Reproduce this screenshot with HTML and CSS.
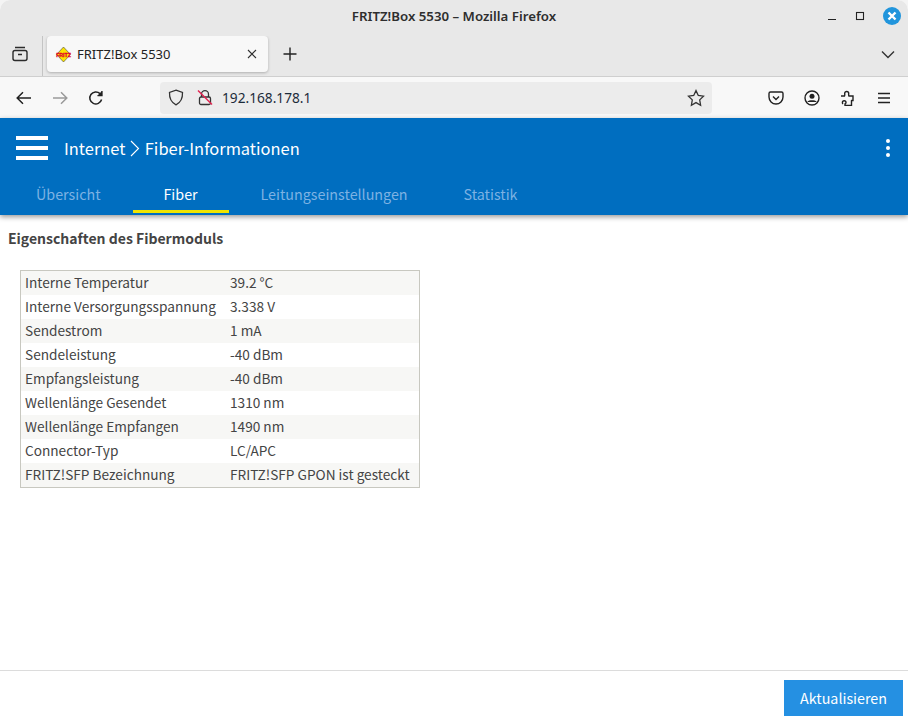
FILE: index.html
```html
<!DOCTYPE html>
<html lang="de">
<head>
  <meta charset="UTF-8">
  <title>FRITZ!Box 5530 – Mozilla Firefox</title>
  <link rel="stylesheet" href="styles.css">
</head>
<body>
  <div class="window">
    <div class="titlebar">
      <span class="window-title">FRITZ!Box 5530 – Mozilla Firefox</span>
      <div class="window-buttons">
        <svg width="12" height="12" viewBox="0 0 12 12"><path d="M2 9.500h8" stroke="#222" stroke-width="1.200" fill="none"/></svg>
        <svg width="12" height="12" viewBox="0 0 12 12"><rect x="2.500" y="2.500" width="7" height="7" stroke="#222" stroke-width="1.100" fill="none"/></svg>
        <span class="close-btn">
          <svg width="18" height="18" viewBox="0 0 18 18"><path d="M5.500 5.500l7 7M12.500 5.500l-7 7" stroke="#fff" stroke-width="2.400" fill="none"/></svg>
        </span>
      </div>
    </div>

    <div class="tabbar">
      <div class="tab-view">
        <svg width="18" height="18" viewBox="0 0 18 18" fill="none" stroke="#2b2b2b" stroke-width="1.400"><path d="M4 2.500h10"/><rect x="2" y="5.500" width="14" height="10" rx="2"/><path d="M7 9.500h4"/></svg>
      </div>
      <div class="tab">
        <svg class="favicon" width="17" height="17" viewBox="0 0 17 17"><path d="M8.500 1L15.500 8.500 8.500 16 1.500 8.500z" fill="#fce300" stroke="#444" stroke-width=".6"/><text x="8.500" y="10.500" class="favicon-text">FRITZ</text></svg>
        <span class="tab-label">FRITZ!Box 5530</span>
        <svg class="tab-close" width="10" height="10" viewBox="0 0 10 10"><path d="M1 1l8 8M9 1l-8 8" stroke="#333" stroke-width="1.100" fill="none"/></svg>
      </div>
      <svg class="new-tab" width="14" height="14" viewBox="0 0 14 14"><path d="M7 .5v13M.5 7h13" stroke="#222" stroke-width="1.400" fill="none"/></svg>
      <svg class="tab-list" width="14" height="9" viewBox="0 0 14 9"><path d="M1 1.500l6 6 6-6" stroke="#333" stroke-width="1.400" fill="none"/></svg>
    </div>

    <div class="navbar">
      <svg class="nav-icon" width="16" height="14" viewBox="0 0 16 14" fill="none" stroke="#222" stroke-width="1.500"><path d="M15 7H1.500M7 1.200L1.200 7 7 12.800"/></svg>
      <svg class="nav-icon" width="16" height="14" viewBox="0 0 16 14" fill="none" stroke="#9a9a9a" stroke-width="1.500"><path d="M1 7h13.500M9 1.200L14.800 7 9 12.800"/></svg>
      <svg class="nav-icon" width="16" height="16" viewBox="0 0 16 16" fill="none" stroke="#222" stroke-width="1.500"><path d="M13.600 9.500A6 6 0 1 1 12 3.600"/><path d="M14 1v4.600H9.500" stroke-width="1.300" fill="#222"/></svg>
      <div class="urlbar">
        <svg width="16" height="17" viewBox="0 0 16 17" fill="none" stroke="#333" stroke-width="1.300"><path d="M8 1.200L14.500 3.400C14.800 9.500 12.500 13.600 8 15.800 3.500 13.600 1.200 9.500 1.500 3.400z"/></svg>
        <svg class="lock" width="16" height="17" viewBox="0 0 16 17" fill="none"><path d="M4.500 8V5.200a3.500 3.500 0 0 1 7 0V8" stroke="#333" stroke-width="1.300"/><rect x="2.500" y="8" width="11" height="7.500" rx="1.500" stroke="#333" stroke-width="1.300"/><path d="M1 1.500l14 14" stroke="#e2224f" stroke-width="1.400"/></svg>
        <span class="url">192.168.178.1</span>
        <svg class="star" width="18" height="18" viewBox="0 0 18 18" fill="none" stroke="#333" stroke-width="1.300"><path d="M9 1.600l2.300 4.900 5.200.7-3.800 3.700.9 5.300L9 13.600l-4.600 2.600.9-5.300L1.500 7.200l5.200-.7z"/></svg>
      </div>
      <div class="toolbar-icons">
        <svg width="16" height="16" viewBox="0 0 16 16" fill="none" stroke="#222" stroke-width="1.400"><path d="M2.500 2h11A1.500 1.500 0 0 1 15 3.500V7A7 7 0 0 1 1 7V3.500A1.500 1.500 0 0 1 2.500 2z"/><path d="M5 6.500l3 3 3-3"/></svg>
        <svg width="16" height="16" viewBox="0 0 16 16" fill="none"><circle cx="8" cy="8" r="7" stroke="#222" stroke-width="1.400"/><circle cx="8" cy="6.300" r="2.500" fill="#222"/><path d="M3.500 11.500C5 9.800 11 9.800 12.500 11.500V12H3.500z" fill="#222"/></svg>
        <svg width="16" height="16" viewBox="0 0 16 16" fill="none" stroke="#222" stroke-width="1.400"><path d="M1 6h3.500c.5-1 .2-1.500.2-2.500a2 2 0 0 1 4 0c0 1-.3 1.500.2 2.500H13v4.500c-1 0-1.500-.2-1.500 0v5H5v-1.500c1-.5 1-1 1-1.500a1.800 1.800 0 0 0-3.600 0c0 .5 0 1 .6 1.500"/></svg>
        <svg width="16" height="12" viewBox="0 0 16 12" fill="none" stroke="#222" stroke-width="1.300"><path d="M2 1.500h12M2 6h12M2 10.500h12"/></svg>
      </div>
    </div>

    <header class="app-header">
      <div class="app-title-row">
        <div class="burger"><span></span><span></span><span></span></div>
        <h1 class="breadcrumb">Internet
          <svg class="crumb-sep" width="10" height="17" viewBox="0 0 10 17"><path d="M1 1l7.500 7.500L1 16" stroke="#fff" stroke-width="1.100" fill="none"/></svg>
          Fiber-Informationen</h1>
        <div class="dots"><span></span><span></span><span></span></div>
      </div>
      <nav class="app-tabs">
        <a class="app-tab">Übersicht</a>
        <a class="app-tab active">Fiber</a>
        <a class="app-tab">Leitungseinstellungen</a>
        <a class="app-tab">Statistik</a>
      </nav>
    </header>

    <main class="content">
      <h2 class="section-title">Eigenschaften des Fibermoduls</h2>
      <table class="info-table">
        <tr><td>Interne Temperatur</td><td>39.2 °C</td></tr>
        <tr><td>Interne Versorgungsspannung</td><td>3.338 V</td></tr>
        <tr><td>Sendestrom</td><td>1 mA</td></tr>
        <tr><td>Sendeleistung</td><td>-40 dBm</td></tr>
        <tr><td>Empfangsleistung</td><td>-40 dBm</td></tr>
        <tr><td>Wellenlänge Gesendet</td><td>1310 nm</td></tr>
        <tr><td>Wellenlänge Empfangen</td><td>1490 nm</td></tr>
        <tr><td>Connector-Typ</td><td>LC/APC</td></tr>
        <tr><td>FRITZ!SFP Bezeichnung</td><td>FRITZ!SFP GPON ist gesteckt</td></tr>
      </table>
    </main>

    <footer class="app-footer">
      <button class="refresh">Aktualisieren</button>
    </footer>
  </div>
</body>
</html>
```
FILE: styles.css
```css
* {
  box-sizing: border-box;
}
html, body {
  margin: 0;
  padding: 0;
  background: #f4f4f4;
}
.window {
  width: 908px;
  height: 726px;
  display: flex;
  flex-direction: column;
  overflow: hidden;
  background: #fff;
  border-radius: 10px 10px 0 0;
  font-family: "Noto Sans", sans-serif;
}

/* browser chrome */
.titlebar {
  height: 36px;
  flex: none;
  display: flex;
  align-items: center;
  justify-content: center;
  position: relative;
  padding-bottom: 5px;
  background: #e8e8e8;
}
.window-title {
  font-size: 13.25px;
  font-weight: 600;
  color: #2e2e2e;
}
.window-buttons {
  position: absolute;
  right: 8px;
  top: 7px;
  display: flex;
  align-items: center;
  gap: 16px;
}
.close-btn {
  width: 18px;
  height: 18px;
  margin-left: 1px;
  margin-right: -1px;
  border-radius: 50%;
  background: #2195dc;
  display: block;
}
.close-btn svg {
  display: block;
}
.tabbar {
  height: 41px;
  flex: none;
  display: flex;
  align-items: center;
  background: #e8e8e8;
  border-bottom: 1px solid #cfcfcf;
  padding-bottom: 4px;
}
.tab-view {
  width: 43px;
  height: 40px;
  flex: none;
  margin-top: 4px;
  padding: 0 3px 5px 0;
  display: flex;
  align-items: center;
  justify-content: center;
  border-right: 1px solid #c4c4c4;
}
.tab {
  width: 221px;
  height: 36px;
  margin-left: 4px;
  flex: none;
  display: flex;
  align-items: center;
  padding: 0 11px 0 8px;
  background: #f8f8f8;
  border-radius: 4px;
  box-shadow: 0 1px 3px rgba(0, 0, 0, .25);
}
.favicon-text {
  font-family: "Liberation Sans", sans-serif;
  font-size: 5.2px;
  font-weight: 700;
  fill: #e2002a;
  stroke: #e2002a;
  stroke-width: .3px;
  text-anchor: middle;
}
.tab-label {
  margin-left: 5px;
  flex: 1;
  font-size: 13px;
  color: #222;
}
.new-tab {
  margin-left: 15px;
}
.tab-list {
  margin-left: auto;
  margin-right: 13px;
}
.navbar {
  height: 41px;
  flex: none;
  display: flex;
  align-items: center;
  padding-left: 16px;
  background: #f8f8f8;
}
.nav-icon {
  flex: none;
  margin-right: 20px;
}
.urlbar {
  width: 552px;
  height: 32px;
  flex: none;
  margin-left: 36px;
  display: flex;
  align-items: center;
  padding: 0 7px 0 8px;
  background: #ececec;
  border-radius: 4px;
}
.lock {
  margin-left: 13px;
}
.url {
  margin-left: 9px;
  flex: 1;
  font-size: 13.7px;
  color: #1c2b3a;
}
.toolbar-icons {
  margin-left: 56px;
  display: flex;
  align-items: center;
  gap: 20px;
}

/* fritzbox page */
.app-header {
  height: 97px;
  flex: none;
  background: #006ec0;
  box-shadow: 0 2px 5px rgba(0, 0, 0, .4);
  position: relative;
  color: #fff;
  font-family: "Noto Sans CJK JP", "Noto Sans", sans-serif;
}
.app-title-row {
  height: 60px;
  display: flex;
  align-items: center;
  padding: 0 18px 0 16px;
}
.burger {
  width: 32px;
  display: flex;
  flex-direction: column;
  gap: 6px;
  margin-right: 16px;
}
.burger span {
  height: 4px;
  background: #fff;
}
.breadcrumb {
  margin: 0;
  flex: 1;
  font-size: 16.45px;
  font-weight: 400;
}
.crumb-sep {
  margin: 0 1px;
  vertical-align: -2px;
}
.dots {
  display: flex;
  flex-direction: column;
  gap: 3px;
}
.dots span {
  width: 4px;
  height: 4px;
  border-radius: 50%;
  background: #fff;
}
.app-tabs {
  display: flex;
  padding-left: 8px;
}
.app-tab {
  height: 35px;
  padding: 0 28px;
  font-size: 14.3px;
  line-height: 31px;
  color: #7db2e3;
}
.app-tab:nth-child(1), .app-tab:nth-child(2) {
  margin-right: 4px;
}
.app-tab.active {
  width: 96px;
  padding: 0;
  text-align: center;
  color: #fff;
  border-bottom: 3px solid #f0e400;
}
.content {
  flex: 1;
  padding: 13px 8px 0;
  color: #444;
  font-family: "Noto Sans CJK JP", "Noto Sans", sans-serif;
}
.section-title {
  margin: 0 0 22px;
  font-size: 14px;
  line-height: 20px;
  font-weight: 600;
}
.info-table {
  width: 400px;
  margin-left: 12px;
  border-collapse: separate;
  border-spacing: 0;
  border: 1px solid #c8c8c0;
  font-size: 13.65px;
}
.info-table td {
  height: 24px;
  padding: 0 4px 2px;
  white-space: nowrap;
}
.info-table td:first-child {
  width: 205px;
}
.info-table tr:nth-child(odd) {
  background: #f7f7f5;
}
.app-footer {
  height: 56px;
  flex: none;
  display: flex;
  justify-content: flex-end;
  padding: 9px 5px 0 0;
  border-top: 1px solid #dcdcdc;
}
.refresh {
  width: 119px;
  height: 36px;
  padding-bottom: 2px;
  border: none;
  background: #2590e2;
  color: #fff;
  font-family: "Noto Sans CJK JP", "Noto Sans", sans-serif;
  font-size: 14.3px;
}
```
